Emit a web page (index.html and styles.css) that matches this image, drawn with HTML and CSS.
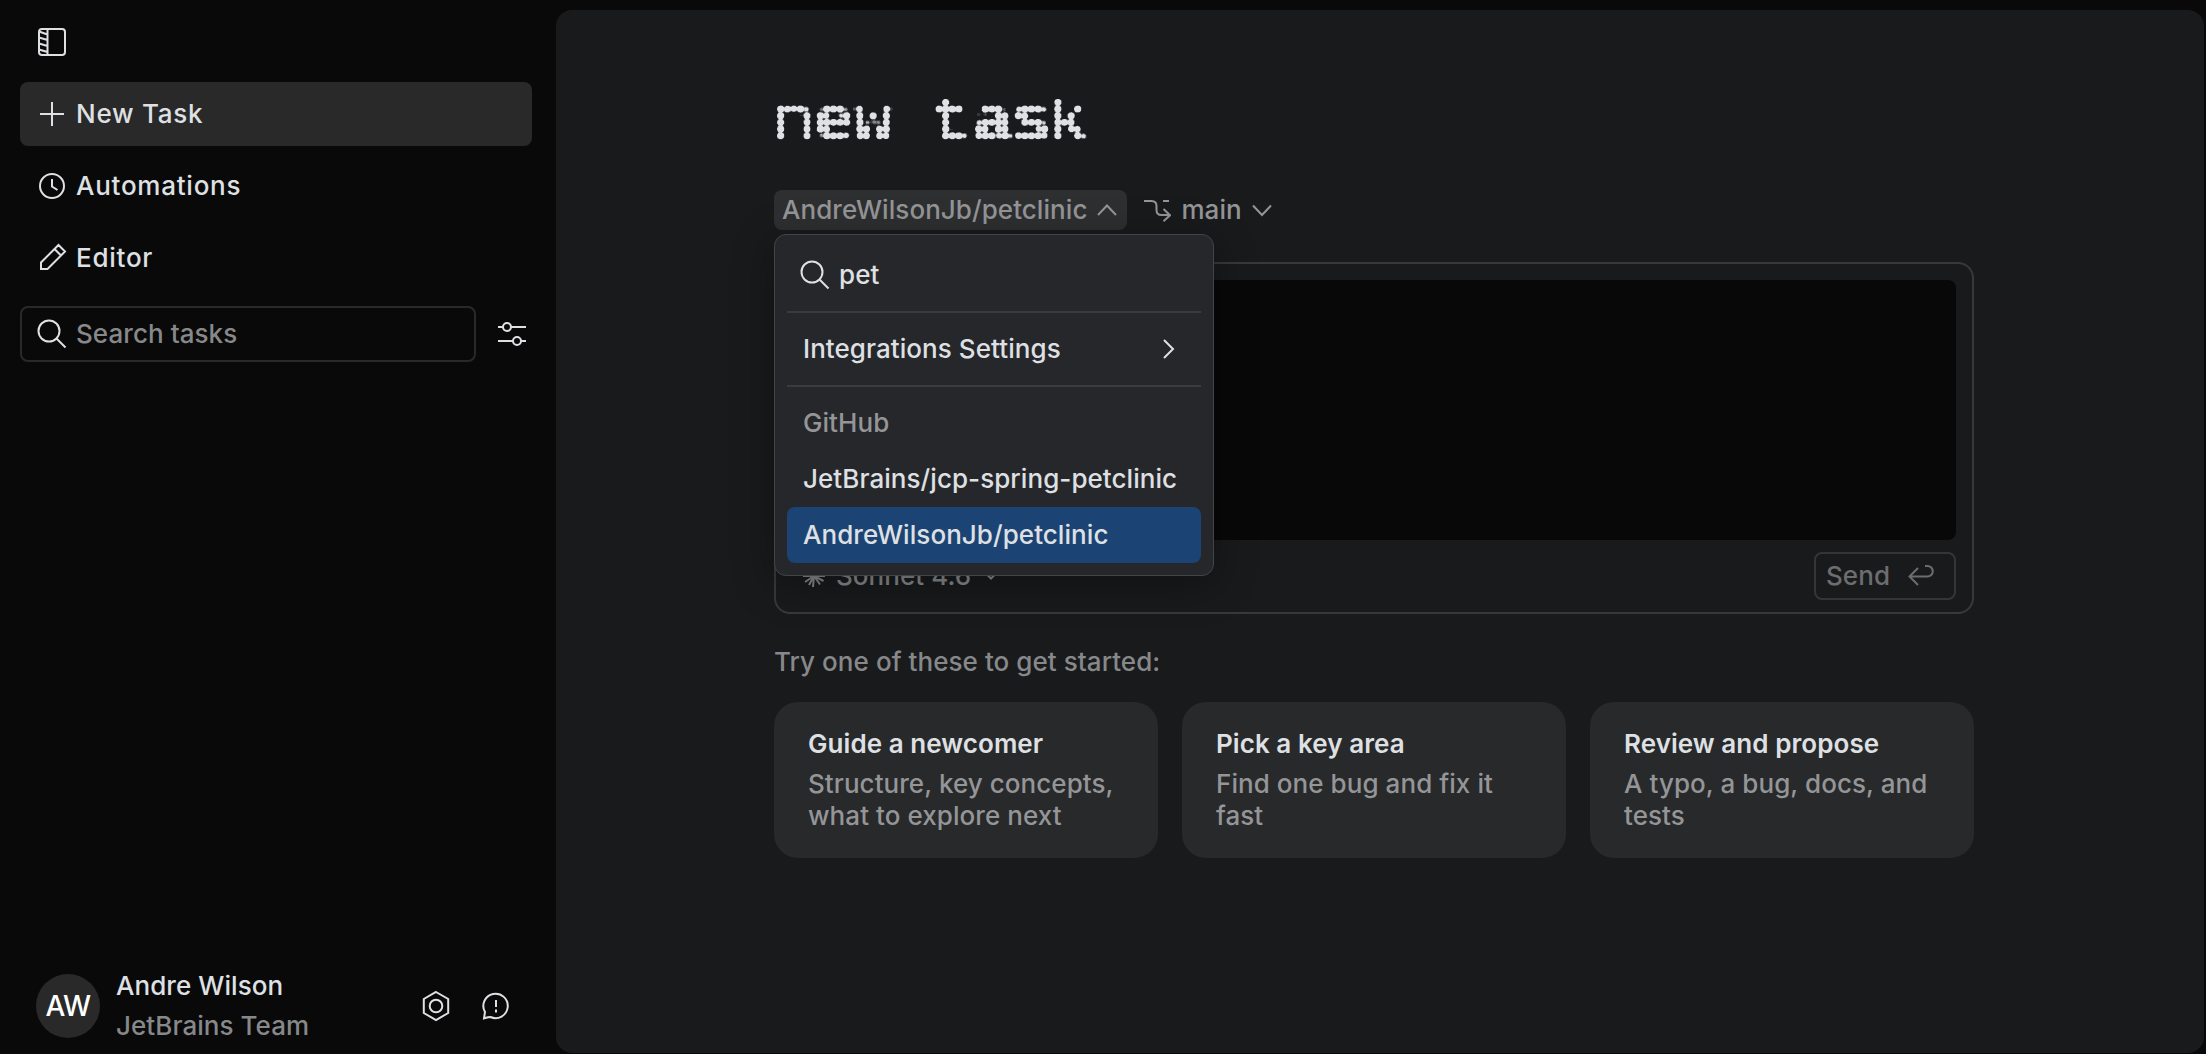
FILE: index.html
```
<!DOCTYPE html>
<html lang="en">
  <head>
    <meta charset="UTF-8" />
    <meta name="viewport" content="width=device-width, initial-scale=1.0" />
    <title>New Task</title>
    <link rel="stylesheet" href="styles.css">
  </head>
  <body>
    <div class="app">
      <aside class="sidebar">
        <button class="toggle">
          <svg class="icon" width="32" height="32" viewBox="0 0 32 32">
            <rect x="3" y="3" width="26" height="26" rx="3" />
            <path d="M11.500 3v26M3 5.500l8.500 3M3 11.500l8.500 2.500M3 17.500l8.500 2.500M3 23.500l8.500 2.500" />
          </svg>
        </button>
        <nav class="nav">
          <a class="nav-item active">
            <svg class="icon" width="32" height="32" viewBox="0 0 32 32"><path d="M16 4v24M4 16h24" /></svg>
            <span>New Task</span>
          </a>
          <a class="nav-item">
            <svg class="icon" width="32" height="32" viewBox="0 0 32 32">
              <circle cx="16" cy="16" r="12" />
              <path d="M16 9v7.500l5.500 3.500" />
            </svg>
            <span>Automations</span>
          </a>
          <a class="nav-item">
            <svg class="icon" width="32" height="32" viewBox="0 0 32 32">
              <path d="M5 27v-6.500L22.500 3 29 9.500 11.500 27zM18.500 7l6.500 6.500" />
            </svg>
            <span>Editor</span>
          </a>
        </nav>
        <div class="filter-row">
          <div class="search">
            <svg class="icon" width="32" height="32" viewBox="0 0 32 32">
              <circle cx="13" cy="13" r="10.500" />
              <path d="M20.500 20.500l9 9" />
            </svg>
            <span>Search tasks</span>
          </div>
          <svg class="icon" width="32" height="32" viewBox="0 0 32 32">
            <circle cx="11" cy="9" r="4" />
            <circle cx="21" cy="23" r="4" />
            <path d="M2 9h5M15 9h15M2 23h15M25 23h5" />
          </svg>
        </div>

        <div class="account">
          <div class="avatar">AW</div>
          <div class="who">
            <p class="name">Andre Wilson</p>
            <p class="team">JetBrains Team</p>
          </div>
          <svg class="icon" width="32" height="32" viewBox="0 0 32 32">
            <path d="M16 2l12.200 7v14L16 30 3.800 23V9z" />
            <circle cx="16" cy="16" r="6.300" />
          </svg>
          <svg class="icon" width="32" height="32" viewBox="0 0 32 32">
            <path d="M4 28.300l1-6.300A12.200 12.200 0 1 1 10.500 27l-2.500.300z" />
            <path d="M16 10v7M16 19.500v3" />
          </svg>
        </div>
      </aside>

      <main class="panel">
        <div class="content">
          <h1 class="title">
            <svg width="340" height="70" viewBox="0 0 340 70">
              <defs>
                <!-- one small sample per dot, 5 x 3 dots in a tile -->
                <pattern id="grid" x="13.400" y="9.030" width="33" height="20" patternUnits="userSpaceOnUse">
                  <g fill="#fff">
                    <circle cx="3.300" cy="3.330" r="0.900" />
                    <circle cx="9.900" cy="3.330" r="0.900" />
                    <circle cx="16.500" cy="3.330" r="0.900" />
                    <circle cx="23.100" cy="3.330" r="0.900" />
                    <circle cx="29.700" cy="3.330" r="0.900" />
                    <circle cx="3.300" cy="10" r="0.900" />
                    <circle cx="9.900" cy="10" r="0.900" />
                    <circle cx="16.500" cy="10" r="0.900" />
                    <circle cx="23.100" cy="10" r="0.900" />
                    <circle cx="29.700" cy="10" r="0.900" />
                    <circle cx="3.300" cy="16.670" r="0.900" />
                    <circle cx="9.900" cy="16.670" r="0.900" />
                    <circle cx="16.500" cy="16.670" r="0.900" />
                    <circle cx="23.100" cy="16.670" r="0.900" />
                    <circle cx="29.700" cy="16.670" r="0.900" />
                  </g>
                </pattern>
                <mask id="samples" maskUnits="userSpaceOnUse" x="0" y="0" width="340" height="70">
                  <rect x="0" y="9" width="340" height="40" fill="url(#grid)" />
                </mask>
                <!-- grows every sample back into a round dot -->
                <filter id="dots" filterUnits="userSpaceOnUse" x="0" y="0" width="340" height="70" color-interpolation-filters="sRGB">
                  <feGaussianBlur stdDeviation="1.700" />
                  <feComponentTransfer result="blob">
                    <feFuncA type="linear" slope="50" intercept="-0.250" />
                  </feComponentTransfer>
                  <feFlood flood-color="#e0e1e4" />
                  <feComposite operator="in" in2="blob" />
                </filter>
              </defs>
              <g filter="url(#dots)">
                <g class="title-text" mask="url(#samples)">
                  <text class="thin" x="8.800" y="49.900" textLength="41.600" lengthAdjust="spacingAndGlyphs">n</text>
                  <text x="49.700" y="49.900">e</text>
                  <text class="thin" x="89.300" y="49.900">w</text>
                  <text x="167.400" y="49.900">t</text>
                  <text x="209" y="49.900">a</text>
                  <text x="247.600" y="49.900">s</text>
                  <text class="thin" x="282.600" y="49.900" textLength="44.400" lengthAdjust="spacingAndGlyphs">k</text>
                </g>
              </g>
            </svg>
          </h1>

          <div class="context">
            <button class="picker open">
              <span>AndreWilsonJb/petclinic</span>
              <svg class="icon" width="20" height="20" viewBox="0 0 20 20"><path d="M1 15l9-9.500 9 9.500" /></svg>
            </button>
            <button class="picker">
              <svg class="icon" width="28" height="28" viewBox="0 0 28 28">
                <path d="M1 5h7.500c3 0 5 2 5 5v4c0 3 2 5 5 5h8M20 5h6M20.500 13l6.500 6.200-6.500 6" />
              </svg>
              <span>main</span>
              <svg class="icon" width="20" height="20" viewBox="0 0 20 20"><path d="M1 5.500L10 15l9-9.500" /></svg>
            </button>

            <div class="menu">
              <div class="menu-search">
                <svg class="icon" width="32" height="32" viewBox="0 0 32 32">
                  <circle cx="13" cy="13" r="10.500" />
                  <path d="M20.500 20.500l9 9" />
                </svg>
                <span>pet</span>
              </div>
              <hr />
              <div class="menu-item">
                <span>Integrations Settings</span>
                <svg class="icon" width="20" height="20" viewBox="0 0 20 20"><path d="M6 1l9 9-9 9" /></svg>
              </div>
              <hr />
              <div class="menu-item label">GitHub</div>
              <div class="menu-item">JetBrains/jcp-spring-petclinic</div>
              <div class="menu-item selected">AndreWilsonJb/petclinic</div>
            </div>
          </div>

          <div class="composer">
            <div class="prompt"></div>
            <div class="toolbar">
              <div class="model">
                <svg class="icon" width="24" height="24" viewBox="0 0 24 24">
                  <path d="M12 12V1M12 12l-1 11M12 12H1M12 12h11M12 12L6 2.500M12 12l6-9.500M12 12L2.500 6.500M12 12l9.500-5.500M12 12l-9 6M12 12l9.500 5M12 12l-5 9M12 12l6 8.500" />
                </svg>
                <span>Sonnet 4.6</span>
                <svg class="icon chevron" width="12" height="12" viewBox="0 0 12 12"><path d="M1 3.500l5 5 5-5" /></svg>
              </div>
              <button class="send">
                <span>Send</span>
                <svg class="icon" width="28" height="28" viewBox="0 0 28 28">
                  <path d="M18 4h2.500a5.200 5.200 0 0 1 0 10.500H2.500M11 6l-8.500 8.500L11 23" />
                </svg>
              </button>
            </div>
          </div>

          <p class="hint">Try one of these to get started:</p>
          <div class="cards">
            <div class="card">
              <h2>Guide a newcomer</h2>
              <p>Structure, key concepts, what to explore next</p>
            </div>
            <div class="card">
              <h2>Pick a key area</h2>
              <p>Find one bug and fix it fast</p>
            </div>
            <div class="card">
              <h2>Review and propose</h2>
              <p>A typo, a bug, docs, and tests</p>
            </div>
          </div>
        </div>
      </main>
    </div>
  </body>
</html>
```
FILE: styles.css
```
* {
  padding: 0;
  margin: 0;
  box-sizing: border-box;
}

body {
  background: #090909;
  color: #dfe0e3;
  font-family: Inter, "Liberation Sans", sans-serif;
  font-size: 26px;
  font-weight: 450;
  line-height: 32px;
  letter-spacing: 0.060px;
}

button {
  background: none;
  border: none;
  color: inherit;
  font: inherit;
  letter-spacing: inherit;
}

.icon {
  display: block;
  flex-shrink: 0;
  fill: none;
  stroke: currentColor;
  stroke-width: 2;
}

.app {
  display: flex;
  height: 1054px;
  overflow: hidden;
}

/* sidebar */

.sidebar {
  display: flex;
  flex-direction: column;
  width: 556px;
  padding: 26px 24px 8px 20px;
}

.toggle {
  width: 64px;
  height: 32px;
  padding-left: 16px;
  margin-bottom: 24px;
}

.nav {
  display: flex;
  flex-direction: column;
  gap: 8px;
}

.nav-item {
  display: flex;
  align-items: center;
  gap: 8px;
  height: 64px;
  padding: 0 16px;
  border-radius: 8px;
  letter-spacing: 0.75px;
}

.nav-item.active {
  background: #292929;
}

.filter-row {
  display: flex;
  align-items: center;
  gap: 20px;
  margin-top: 16px;
}

.search {
  display: flex;
  align-items: center;
  gap: 8px;
  width: 456px;
  height: 56px;
  padding: 0 14px;
  border: 2px solid #292929;
  border-radius: 8px;
}

.search span {
  color: #87888a;
}

.account {
  display: flex;
  align-items: center;
  gap: 28px;
  margin-top: auto;
  padding: 0 20px 0 16px;
}

.avatar {
  width: 64px;
  height: 64px;
  border-radius: 50%;
  background: #292929;
  color: #fff;
  font-size: 28px;
  font-weight: 500;
  line-height: 64px;
  letter-spacing: -0.5px;
  text-align: center;
}

.who {
  flex: 1;
  margin-left: -12px;
}

.who p {
  line-height: 40px;
}

.team {
  color: #87888a;
}

/* main panel */

.panel {
  width: 1648px;
  height: 1043px;
  margin-top: 10px;
  border-radius: 16px;
  background: #191a1c;
}

.content {
  width: 1200px;
  margin-left: 218px;
  padding-top: 80px;
}

.title {
  height: 100px;
  margin-left: -10px;
}

.title svg {
  display: block;
}

.title-text {
  fill: #fff;
  font-family: "Liberation Mono", monospace;
  font-size: 66px;
  font-weight: 700;
  letter-spacing: 0;
}

.title-text .thin {
  font-weight: 400;
}

.context {
  position: relative;
  display: flex;
  gap: 8px;
  height: 40px;
  color: #949597;
}

.picker {
  display: flex;
  align-items: center;
  gap: 10px;
  height: 40px;
  padding: 0 10px 0 8px;
  border-radius: 8px;
}

.picker.open {
  background: #2e2f30;
}

.menu {
  position: absolute;
  z-index: 1;
  top: 44px;
  left: 0;
  width: 440px;
  height: 342px;
  padding: 12px;
  border: 1px solid #434447;
  border-radius: 12px;
  background: #26272b;
  box-shadow: 0 8px 40px rgba(0, 0, 0, 0.35);
  color: #dfe0e3;
}

.menu-search {
  display: flex;
  align-items: center;
  gap: 8px;
  height: 56px;
  padding: 0 12px;
  margin-bottom: 8px;
}

.menu hr {
  height: 2px;
  border: none;
  background: #3a3b3d;
}

.menu-item {
  display: flex;
  align-items: center;
  justify-content: space-between;
  height: 56px;
  padding: 0 23px 0 16px;
  border-radius: 8px;
  white-space: nowrap;
}

hr + .menu-item {
  margin-top: 8px;
}

.menu-item + hr {
  margin-top: 8px;
}

.menu-item.label {
  color: #949597;
}

.menu-item.selected {
  background: #1b4474;
}

.composer {
  height: 352px;
  margin-top: 32px;
  padding: 16px;
  border: 2px solid #38393b;
  border-radius: 16px;
}

.prompt {
  height: 260px;
  border-radius: 8px;
  background: #080808;
}

.toolbar {
  display: flex;
  align-items: center;
  justify-content: space-between;
  margin-top: 12px;
}

.model {
  display: flex;
  align-items: center;
  gap: 10px;
  padding-left: 10px;
  color: #87888a;
}

.model .chevron {
  margin-left: 4px;
}

.send {
  display: flex;
  align-items: center;
  gap: 17px;
  width: 142px;
  height: 48px;
  padding-left: 10px;
  border: 2px solid #343537;
  border-radius: 8px;
  color: #6c6d6f;
}

.hint {
  margin: 32px 0 24px;
  color: #87888a;
}

.cards {
  display: flex;
  gap: 24px;
}

.card {
  flex: 1;
  height: 156px;
  padding: 26px 30px 0 34px;
  border-radius: 24px;
  background: #28292b;
}

.card h2 {
  margin-bottom: 8px;
  font-size: 26px;
  font-weight: 600;
}

.card p {
  color: #949597;
}
```
